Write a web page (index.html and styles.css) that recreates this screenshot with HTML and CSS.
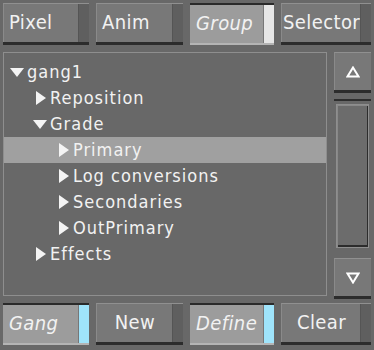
FILE: index.html
```html
<!DOCTYPE html>
<html lang="en">
<head>
    <meta charset="UTF-8">
    <title>Gang Selector</title>
    <link rel="stylesheet" href="styles.css">
</head>
<body>

<div class="panel">
    <div class="toolbar">
        <div class="btn">Pixel</div>
        <div class="btn">Anim</div>
        <div class="btn pressed"><i>Group</i></div>
        <div class="btn wide">Selector</div>
    </div>

    <div class="middle">
        <div class="tree">
            <div class="row lvl0"><span class="caret down"></span>gang1</div>
            <div class="row lvl1"><span class="caret right"></span>Reposition</div>
            <div class="row lvl1"><span class="caret down"></span>Grade</div>
            <div class="row lvl2 selected"><span class="caret right"></span>Primary</div>
            <div class="row lvl2"><span class="caret right"></span>Log conversions</div>
            <div class="row lvl2"><span class="caret right"></span>Secondaries</div>
            <div class="row lvl2"><span class="caret right"></span>OutPrimary</div>
            <div class="row lvl1"><span class="caret right"></span>Effects</div>
        </div>

        <div class="scrollbar">
            <div class="btn arrow">
                <svg width="14" height="12" viewBox="0 0 14 12"><path d="M7 1.5 L12.5 10.5 L1.5 10.5 Z" fill="none" stroke="#fff" stroke-width="2"/></svg>
            </div>
            <div class="track"><div class="thumb"></div></div>
            <div class="btn arrow">
                <svg width="14" height="12" viewBox="0 0 14 12"><path d="M1.5 1.5 L12.5 1.5 L7 10.5 Z" fill="none" stroke="#fff" stroke-width="2"/></svg>
            </div>
        </div>
    </div>

    <div class="toolbar bottom">
        <div class="btn pressed cyan"><i>Gang</i></div>
        <div class="btn center">New</div>
        <div class="btn pressed cyan"><i>Define</i></div>
        <div class="btn center wide">Clear</div>
    </div>
</div>

</body>
</html>
```

FILE: styles.css
```css
body {
    margin: 0;
    background-color: #686868;
    font-family: "DejaVu Sans Condensed", "DejaVu Sans", sans-serif;
    color: #f2f2f2;
}
.panel {
    width: 374px;
    height: 350px;
    padding: 3px 3px 0 3px;
    box-sizing: border-box;
}
.toolbar {
    display: grid;
    grid-template-columns: 86px 87px 84px 90px;
    column-gap: 7px;
    height: 42px;
}
.toolbar.bottom {
    margin-top: 7px;
}
.btn {
    position: relative;
    background-color: #787878;
    border-top: 1px solid #909090;
    border-left: 1px solid #8a8a8a;
    box-shadow: 0 3px 0 #2c2c2c;
    box-sizing: border-box;
    height: 39px;
    padding: 0 14px 0 5px;
    font-size: 20px;
    letter-spacing: 0.4px;
    line-height: 37px;
    white-space: nowrap;
}
.btn::after {
    content: '';
    position: absolute;
    top: 0;
    right: 0;
    bottom: 0;
    width: 10px;
    background-color: #5f5f5f;
    border-left: 1px solid #555;
}
.btn.wide {
    padding-left: 1px;
}
.btn.center {
    text-align: center;
    padding-left: 0;
    padding-right: 10px;
}
.btn.pressed {
    background-color: #9c9c9c;
    border-top: 2px solid #2a2a2a;
    border-left: none;
    box-shadow: 0 2px 0 #b4b4b4;
    height: 40px;
    padding-left: 6px;
}
.btn.pressed::after {
    background-color: #e6e6e6;
    border-left: 1px solid #777;
}
.btn.pressed.cyan::after {
    background-color: #9fe4fb;
}
.btn i {
    font-family: "DejaVu Sans Condensed", "DejaVu Sans", sans-serif;
    font-style: oblique;
}
.middle {
    display: flex;
    gap: 7px;
    margin-top: 7px;
    height: 244px;
}
.tree {
    flex: 1;
    border: 1px solid #8e8e8e;
    padding-top: 6px;
    font-size: 18px;
    letter-spacing: 1px;
}
.row {
    height: 26px;
    line-height: 26px;
    display: flex;
    align-items: center;
    white-space: nowrap;
}
.row.selected {
    background-color: #a0a0a0;
}
.lvl0 { padding-left: 6px; }
.lvl1 { padding-left: 29px; }
.lvl2 { padding-left: 52px; }
.caret {
    display: inline-block;
    width: 0;
    height: 0;
    margin-right: 3px;
}
.caret.down {
    border-left: 7px solid transparent;
    border-right: 7px solid transparent;
    border-top: 9px solid #f4f4f4;
    margin-right: 3px;
}
.caret.right {
    border-top: 7px solid transparent;
    border-bottom: 7px solid transparent;
    border-left: 10px solid #f4f4f4;
    margin-left: 3px;
    margin-right: 4px;
}
.scrollbar {
    width: 37px;
    display: flex;
    flex-direction: column;
}
.btn.arrow {
    height: 38px;
    padding: 0;
    display: flex;
    align-items: center;
    justify-content: center;
}
.btn.arrow::after {
    display: none;
}
.track {
    flex: 1;
    margin: 9px 0 8px 0;
    border-top: 2px solid #2e2e2e;
    padding: 2px;
    display: flex;
}
.thumb {
    flex: 1;
    border: 1px solid #8e8e8e;
    box-shadow: inset 1px 1px 0 #888, inset -1px -2px 0 #2c2c2c;
    background-color: #6c6c6c;
    margin: 1px 0 0 0;
}
```
